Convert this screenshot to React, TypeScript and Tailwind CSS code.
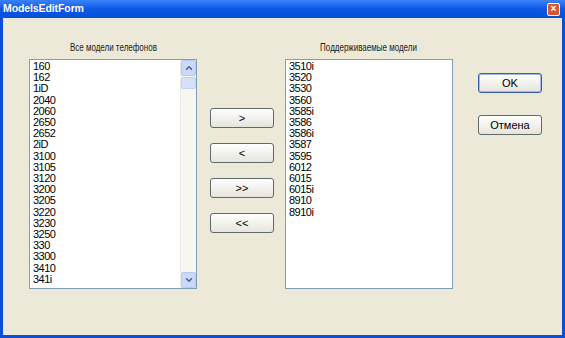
import { ChevronUp, ChevronDown } from 'lucide-react'

const allModels = [
  '160', '162', '1iD', '2040', '2060', '2650', '2652', '2iD', '3100', '3105',
  '3120', '3200', '3205', '3220', '3230', '3250', '330', '3300', '3410', '341i',
]

const supported = [
  '3510i', '3520', '3530', '3560', '3585i', '3586', '3586i', '3587', '3595',
  '6012', '6015', '6015i', '8910', '8910i',
]

function XpButton({ label, focused }: { label: string; focused?: boolean }) {
  return (
    <button
      className={
        'w-[64px] h-[20px] rounded-[3px] border bg-gradient-to-b from-white to-[#e6e4dc] text-[11px] text-black leading-none ' +
        (focused ? 'border-[#3b5fb0] shadow-[inset_0_0_0_1px_#9fb8e8]' : 'border-[#5f6a6a]')
      }
    >
      {label}
    </button>
  )
}

function ListBox({ items, scroll }: { items: string[]; scroll?: boolean }) {
  return (
    <div className="flex w-[168px] h-[230px] border border-[#7f9db9] bg-white overflow-hidden">
      <div className="flex-1 pl-[3px] pt-[1px] text-[11px] leading-[11.2px] text-black tracking-[-0.5px]">
        {items.map((m) => (
          <div key={m}>{m}</div>
        ))}
      </div>
      {scroll && (
        <div className="w-[16px] flex flex-col bg-[#f7f6f1] border-l border-[#eeede5]">
          <div className="h-[16px] flex items-center justify-center rounded-[2px] bg-[#c9d8fb] border border-[#b6c9f4]">
            <ChevronUp className="w-[10px] h-[10px] text-[#4d6185]" strokeWidth={3.5} />
          </div>
          <div className="h-[12px] mt-[1px] rounded-[2px] bg-[#d6e0f8] border border-[#c2d2f5]" />
          <div className="flex-1" />
          <div className="h-[16px] flex items-center justify-center rounded-[2px] bg-[#c9d8fb] border border-[#b6c9f4]">
            <ChevronDown className="w-[10px] h-[10px] text-[#4d6185]" strokeWidth={3.5} />
          </div>
        </div>
      )}
    </div>
  )
}

export default function App() {
  return (
    <div
      className="w-[565px] h-[338px] flex flex-col bg-[#0a4fd8] overflow-hidden"
      style={{ fontFamily: '"Liberation Sans", Arial, sans-serif' }}
    >
      <div className="h-[18px] flex items-center justify-between pl-[3px] pr-[5px] bg-gradient-to-b from-[#3a82f7] via-[#0a58e6] to-[#0650d8]">
        <span className="text-white font-bold text-[10.5px] tracking-[-0.1px]">ModelsEditForm</span>
        <div className="w-[13px] h-[13px] rounded-[2px] bg-[#d9572d] border border-white flex items-center justify-center text-white text-[10px] font-bold leading-none">
          ×
        </div>
      </div>
      <div className="flex-1 mx-[3px] mb-[3px] bg-[#ece9d8] flex pt-[22px] pl-[26px]">
        <div className="flex flex-col items-center">
          <div className="text-[10px] h-[19px] text-[#222] scale-x-[0.8]">Все модели телефонов</div>
          <ListBox items={allModels} scroll />
        </div>
        <div className="flex flex-col gap-[15px] pt-[68px] ml-[13px] mr-[11px]">
          <XpButton label=">" />
          <XpButton label="<" />
          <XpButton label=">>" />
          <XpButton label="<<" />
        </div>
        <div className="flex flex-col items-center">
          <div className="text-[10px] h-[19px] text-[#222] scale-x-[0.8]">Поддерживаемые модели</div>
          <ListBox items={supported} />
        </div>
        <div className="flex flex-col gap-[22px] pt-[33px] ml-[25px]">
          <XpButton label="OK" focused />
          <XpButton label="Отмена" />
        </div>
      </div>
    </div>
  )
}
